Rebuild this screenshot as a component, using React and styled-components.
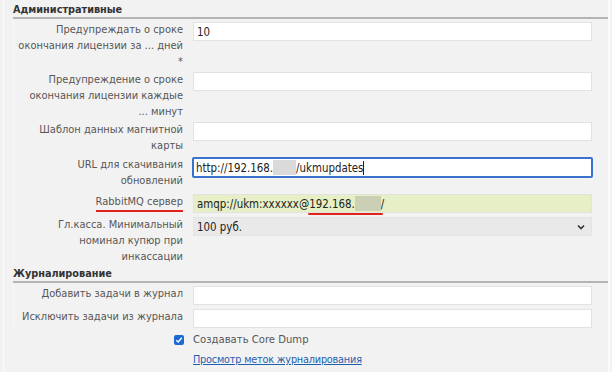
import React from "react";
import styled, { createGlobalStyle } from "styled-components";

const Global = createGlobalStyle`
  html, body { margin: 0; padding: 0; background: #f2f2f2; }
  body { font-family: "DejaVu Sans Condensed", "DejaVu Sans", Verdana, sans-serif; font-stretch: condensed; font-size: 11px; color: #555; }
`;

const Page = styled.div`
  width: 612px;
  height: 372px;
  overflow: hidden;
  background: #f2f2f2;
  display: flex;
`;

const Panel = styled.div`
  margin-left: 3px;
  width: 595px;
  border-left: 1px solid #fafafa;
  border-right: 2px solid #fbfbfb;
  padding: 3px 0 0 9px;
  display: flex;
  flex-direction: column;
`;

const SectionTitle = styled.div`
  font-weight: bold;
  color: #333;
  font-size: 10.8px;
  line-height: 14px;
  border-bottom: 2px solid #b4b4b4;
  margin-top: ${(p) => p.$top || 0}px;
`;

const SectionBody = styled.div`
  border-left: 1px solid #f7f7f7;
  padding-top: ${(p) => p.$pt || 3}px;
  display: flex;
  flex-direction: column;
`;

const Row = styled.div`
  display: grid;
  grid-template-columns: 169px 399px;
  column-gap: 10px;
  align-items: start;
  padding: 1px 0 ${(p) => p.$pb ?? 1}px 0;
`;

const Label = styled.div`
  text-align: right;
  line-height: 16px;
  color: #575757;
  span.mark {
    border-bottom: 2px solid #e0241b;
    padding-bottom: 2px;
  }
`;

const Input = styled.div`
  height: 19px;
  margin-bottom: 2px;
  box-sizing: border-box;
  background: ${(p) => p.$bg || "#fff"};
  border: ${(p) => (p.$focus ? "2px solid #3a72d0" : "1px solid #e2e2e2")};
  border-radius: ${(p) => (p.$focus ? "2px" : "0")};
  color: #222;
  font-size: 11.4px;
  line-height: 16px;
  padding-left: ${(p) => (p.$focus ? "2px" : "3px")};
  display: flex;
  align-items: center;
  white-space: pre;
  ${(p) => p.$focus && "height: 21px; margin: 0 -1px 0 -1px;"}
`;

const Redact = styled.span`
  display: inline-block;
  width: ${(p) => p.$w}px;
  height: 15px;
  background: ${(p) => p.$c};
`;

const Underlined = styled.span`
  display: inline-flex;
  align-items: center;
  position: relative;
  &::after {
    content: "";
    position: absolute;
    left: -1px;
    right: -2px;
    bottom: -3px;
    height: 2px;
    border-radius: 1px;
    background: #e0241b;
  }
`;

const Caret = styled.span`
  display: inline-block;
  width: 1px;
  height: 14px;
  background: #222;
`;

const Select = styled.div`
  height: 19px;
  margin-bottom: 2px;
  box-sizing: border-box;
  background: #e9e9e9;
  border: 1px solid #e4e4e4;
  color: #222;
  font-size: 11.4px;
  padding: 0 6px 0 3px;
  display: flex;
  align-items: center;
  justify-content: space-between;
`;

const CheckRow = styled.div`
  display: grid;
  grid-template-columns: 169px 399px;
  column-gap: 10px;
  align-items: center;
  padding-top: 1px;
  margin-left: 1px;
`;

const CheckCell = styled.div`
  display: flex;
  justify-content: flex-end;
`;

const Box = styled.div`
  width: 10px;
  height: 10px;
  margin-right: -1px;
  border-radius: 2px;
  background: #1b6ad3;
  display: flex;
  align-items: center;
  justify-content: center;
`;

const CheckText = styled.div`
  color: #575757;
  font-size: 11.2px;
  line-height: 16px;
`;

const LinkRow = styled.div`
  padding-left: 180px;
  margin-top: 4px;
  line-height: 16px;
`;

const Link = styled.a`
  color: #1f5fb0;
  font-size: 10.8px;
  letter-spacing: -0.2px;
  text-decoration: underline;
`;

export default function App() {
  return (
    <>
      <Global />
      <Page>
        <Panel>
          <SectionTitle>Административные</SectionTitle>
          <SectionBody $pt={2}>
            <Row>
              <Label>
                Предупреждать о сроке<br />окончания лицензии за ... дней<br />*
              </Label>
              <Input>10</Input>
            </Row>
            <Row>
              <Label>
                Предупреждение о сроке<br />окончания лицензии каждые<br />... минут
              </Label>
              <Input />
            </Row>
            <Row $pb={2}>
              <Label>
                Шаблон данных магнитной<br />карты
              </Label>
              <Input />
            </Row>
            <Row $pb={4}>
              <Label>
                URL для скачивания<br />обновлений
              </Label>
              <Input $focus>
                http://192.168.<Redact $w={23} $c="#dadada" />/ukmupdates<Caret />
              </Input>
            </Row>
            <Row>
              <Label>
                <span className="mark">RabbitMQ сервер</span>
              </Label>
              <Input $bg="#e6efc6">
                amqp://ukm:xxxxxx@
                <Underlined>
                  192.168.<Redact $w={26} $c="#c9d0b3" />
                </Underlined>
                /
              </Input>
            </Row>
            <Row>
              <Label>
                Гл.касса. Минимальный<br />номинал купюр при<br />инкассации
              </Label>
              <Select>
                <span>100 руб.</span>
                <svg width="8" height="6" viewBox="0 0 8 6">
                  <path d="M1 1.5 L4 4.5 L7 1.5" fill="none" stroke="#333" strokeWidth="1.6" />
                </svg>
              </Select>
            </Row>
          </SectionBody>
          <SectionTitle $top={1}>Журналирование</SectionTitle>
          <SectionBody $pt={2}>
            <Row>
              <Label>Добавить задачи в журнал</Label>
              <Input />
            </Row>
            <Row>
              <Label>Исключить задачи из журнала</Label>
              <Input />
            </Row>
          </SectionBody>
          <CheckRow>
            <CheckCell>
              <Box>
                <svg width="8" height="8" viewBox="0 0 8 8">
                  <path d="M1.3 4.2 L3.2 6 L6.8 1.8" fill="none" stroke="#fff" strokeWidth="1.5" />
                </svg>
              </Box>
            </CheckCell>
            <CheckText>Создавать Core Dump</CheckText>
          </CheckRow>
          <LinkRow>
            <Link href="#">Просмотр меток журналирования</Link>
          </LinkRow>
        </Panel>
      </Page>
    </>
  );
}
